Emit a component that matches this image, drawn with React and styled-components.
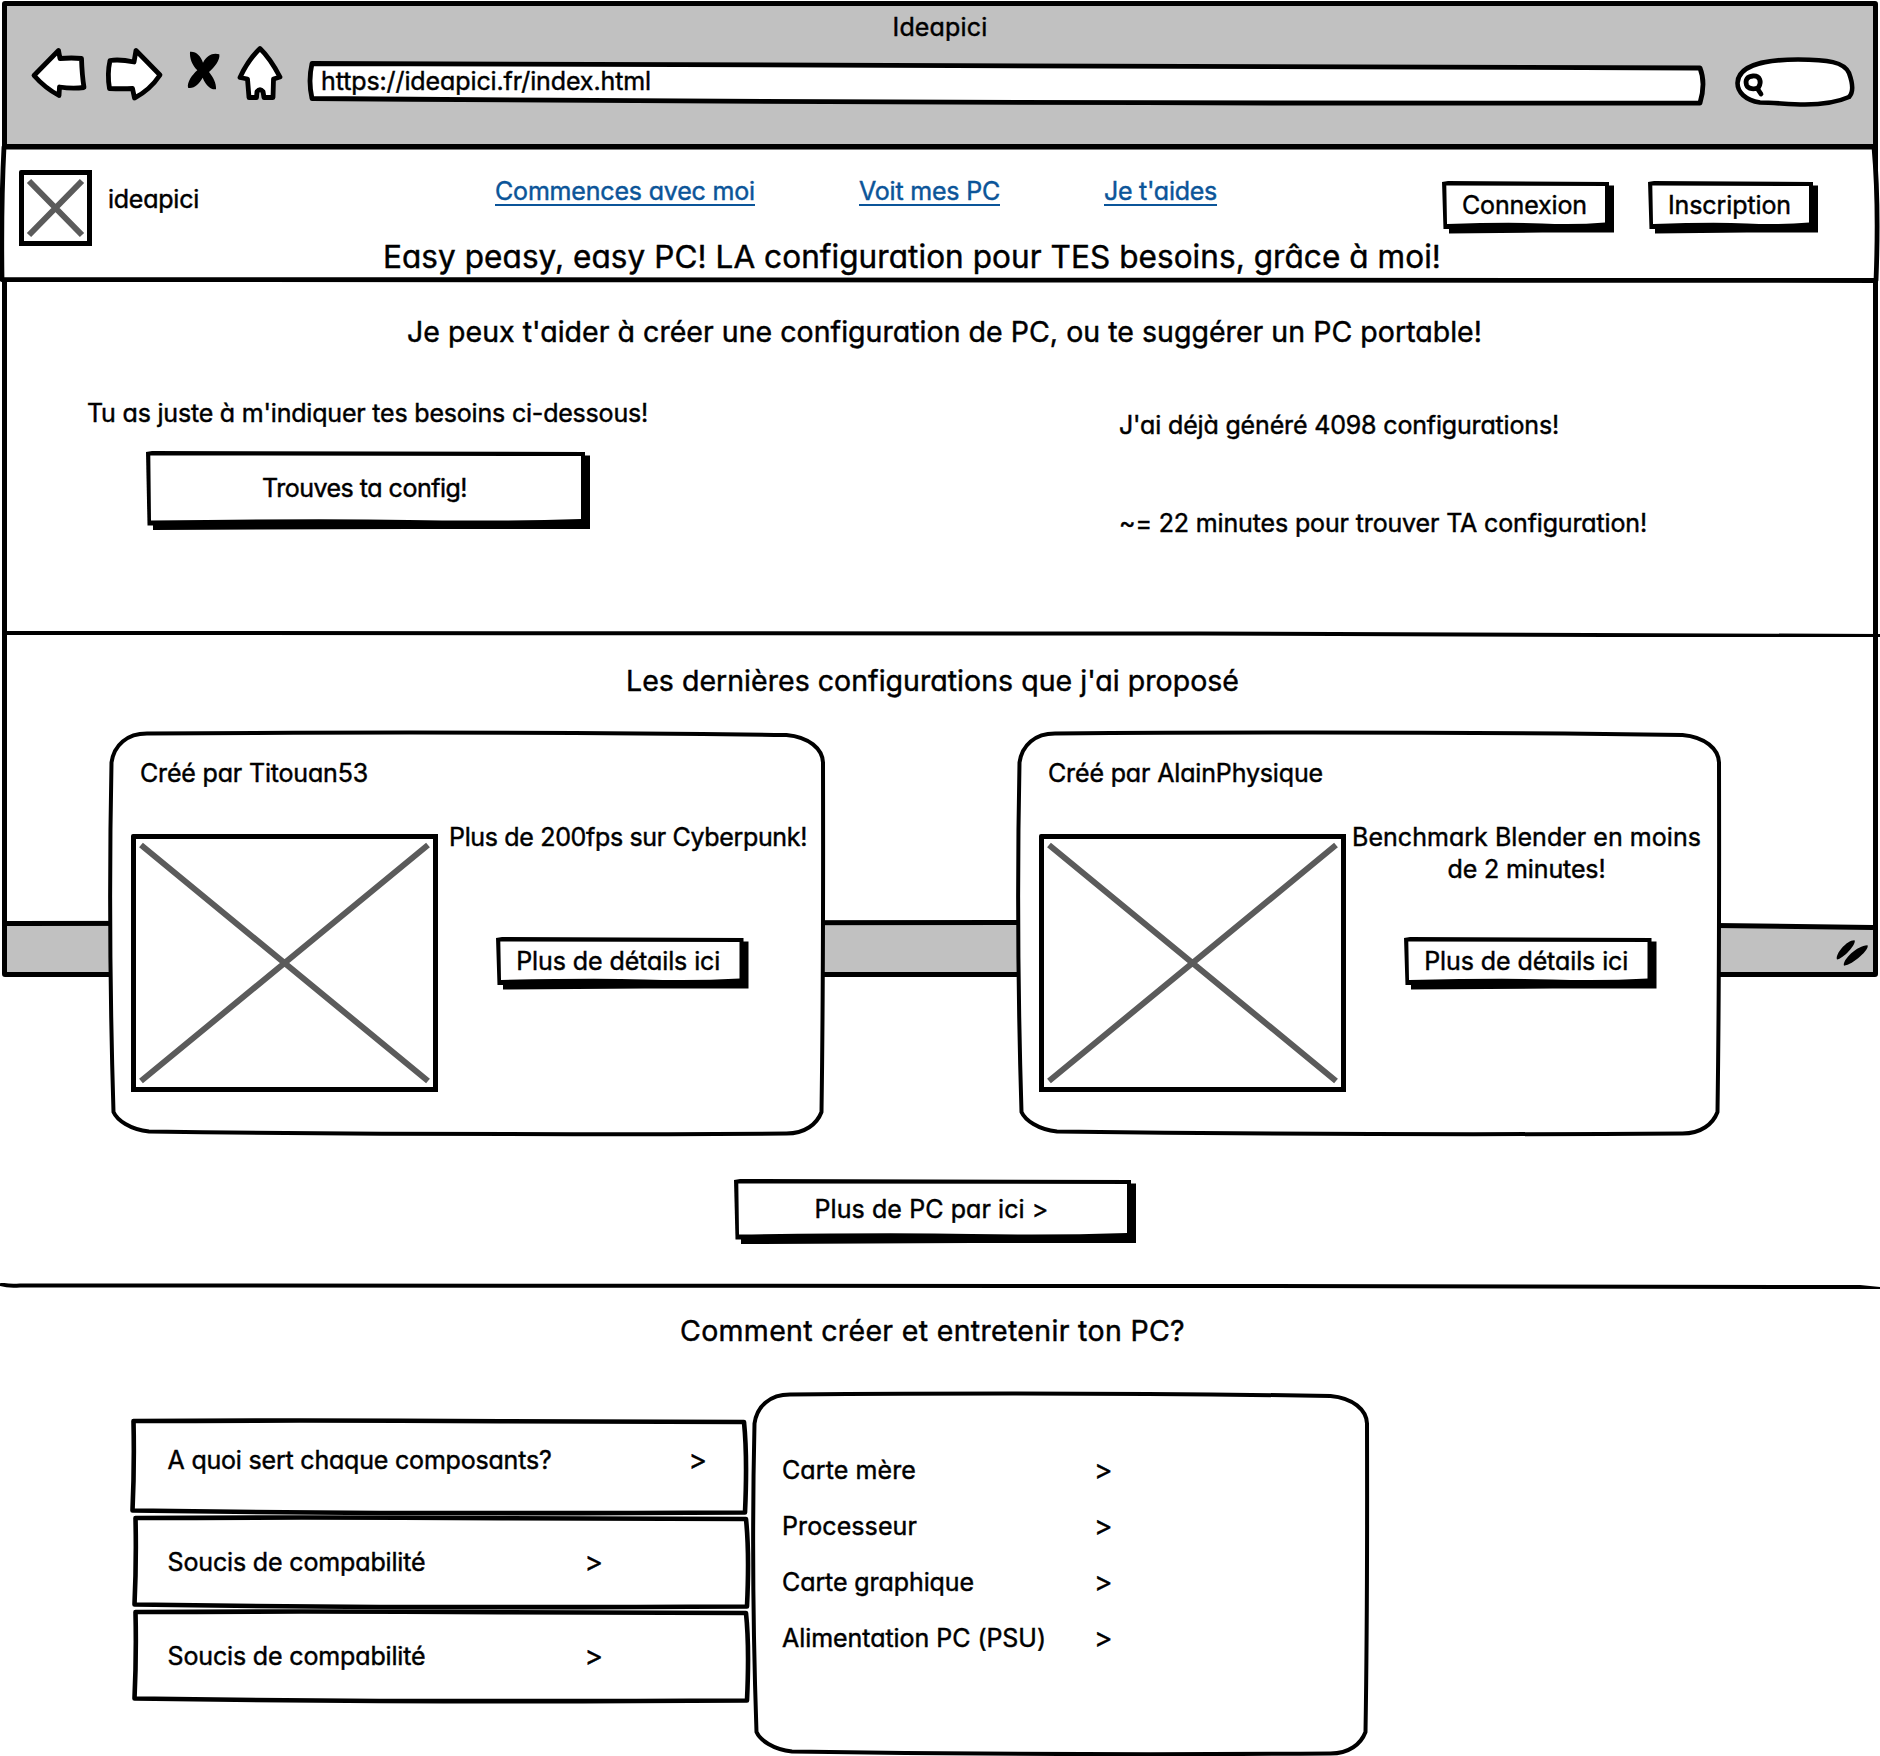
import React, { useLayoutEffect, useRef, useState } from "react";
import styled, { createGlobalStyle } from "styled-components";

const INK = "#000";
const CHROME = "#c1c1c1";
const LINK = "#0b5599";

const GlobalStyle = createGlobalStyle`
  *, *::before, *::after { box-sizing: border-box; }
  body { margin: 0; background: #fff; }
`;

/* ---------- text ---------- */

const TextBox = styled.span`
  display: block;
  flex: none;
  width: ${(p) => p.$w}px;
  margin: 0;
  padding-left: 1px;
  font-size: ${(p) => p.$size}px;
  font-weight: 400;
  line-height: ${(p) => p.$lh}px;
  white-space: nowrap;
`;

const TextRun = styled.span`
  display: inline-block;
`;

/* Tracks a single line of text so that it spans the given width. */
function Label({ w, size = 25, lh = 32, as, className, children }) {
  const ref = useRef(null);
  const [tracking, setTracking] = useState(0);
  useLayoutEffect(() => {
    const natural = ref.current.getBoundingClientRect().width - tracking * children.length;
    setTracking((w - 2 - natural) / children.length);
  }, [w, children]);
  return (
    <TextBox as={as} className={className} $w={w} $size={size} $lh={lh}>
      <TextRun ref={ref} style={{ letterSpacing: `${tracking}px` }}>
        {children}
      </TextRun>
    </TextBox>
  );
}

/* ---------- hand-drawn outlines ---------- */

const Drawing = styled.svg`
  position: absolute;
  inset: 0;
  width: 100%;
  height: 100%;
  overflow: visible;
  z-index: -1;
`;

const Sketched = styled.div`
  position: relative;
  isolation: isolate;
  flex: none;
  width: ${(p) => p.$w}px;
  height: ${(p) => p.$h}px;
`;

function RectOutline({ w, h, stroke = 4.6 }) {
  return (
    <Drawing>
      <path
        d={`M3.5 3 Q${w * 0.3} 2 ${w * 0.6} 3.2 L${w - 4} 4 Q${w - 0.5} ${h * 0.4} ${w - 3} ${h - 2.5} Q${w * 0.45} ${h - 0.5} 2.5 ${h - 4.5} Q4.5 ${h * 0.5} 3.5 3Z`}
        fill="#fff"
        stroke={INK}
        strokeWidth={stroke}
        strokeLinejoin="round"
      />
    </Drawing>
  );
}

function RoundedOutline({ w, h }) {
  return (
    <Drawing>
      <path
        d={`M39 2.5 Q${w * 0.55} 0 ${w - 38.5} 4 C${w - 16} 6 ${w - 2.5} 18 ${w - 2} 31.5
            Q${w - 1.5} ${h * 0.6} ${w - 3.5} ${h - 24} C${w - 8} ${h - 12} ${w - 20} ${h - 2.5} ${w - 38.5} ${h - 2.5}
            Q${w * 0.5} ${h - 0.5} 41 ${h - 4.5} C22 ${h - 6.5} 9 ${h - 16} 5.5 ${h - 24}
            Q0 ${h * 0.5} 3.5 31.5 C6 14 19 2.5 39 2.5Z`}
        fill="#fff"
        stroke={INK}
        strokeWidth="4"
        strokeLinejoin="round"
      />
    </Drawing>
  );
}

function ButtonOutline({ w, h }) {
  return (
    <Drawing>
      <path d={`M7 4.5H${w + 5}V${h + 3.5}H${w * 0.6}L7 ${h + 4.5}Z`} fill={INK} />
      <path d={`M0 1L6 0L${w} 1V${h}H1.5Z`} fill={INK} />
      <path
        d={`M4.3 4.4L${w - 4} 5V${h - 6.5}Q${w * 0.8} ${h - 4} ${w * 0.6} ${h - 5.5}T5 ${h - 5}Z`}
        fill="#fff"
      />
    </Drawing>
  );
}

const ButtonBox = styled.button`
  position: relative;
  isolation: isolate;
  flex: none;
  display: flex;
  justify-content: center;
  align-items: center;
  width: ${(p) => p.$w}px;
  height: ${(p) => p.$h}px;
  padding: 0 2px 0 0;
  border: 0;
  background: none;
  color: inherit;
  font: inherit;
  text-align: left;
`;

function Button({ w, h, textWidth, children }) {
  return (
    <ButtonBox $w={w} $h={h}>
      <ButtonOutline w={w} h={h} />
      <Label w={textWidth}>{children}</Label>
    </ButtonBox>
  );
}

const PictureFrame = styled.div`
  flex: none;
  width: ${(p) => p.$w}px;
  height: ${(p) => p.$h}px;
  border: 5px solid ${INK};
  border-radius: 2px 0 0 0;
  background: #fff;
`;

const Cross = styled.svg`
  display: block;
  width: 100%;
  height: 100%;
`;

function Picture({ w, h }) {
  const iw = w - 10;
  const ih = h - 10;
  return (
    <PictureFrame $w={w} $h={h}>
      <Cross viewBox={`0 0 ${iw} ${ih}`}>
        <path d={`M5 6L${iw - 5} ${ih - 6}M${iw - 5} 6L5 ${ih - 6}`} stroke="#5b5b5b" strokeWidth="6" />
      </Cross>
    </PictureFrame>
  );
}

/* ---------- browser window ---------- */

const Stage = styled.div`
  display: grid;
  grid-template: 1756px / 1880px;
  width: 1880px;
  height: 1756px;
  overflow: hidden;
  background: #fff;
  color: ${INK};
  font-family: Inter, "Liberation Sans", sans-serif;
  font-feature-settings: "cv11";
  -webkit-text-stroke: 0.45px currentColor;
`;

const BrowserWindow = styled.div`
  grid-area: 1 / 1;
  display: flex;
  flex-direction: column;
  justify-content: space-between;
  width: 1876px;
  height: 976px;
  margin: 1px 0 0 2px;
  border: 5px solid ${INK};
  border-radius: 3px;
`;

const Toolbar = styled.div`
  height: 143px;
  background: ${CHROME};
  border-bottom: 5px solid ${INK};
`;

const TitleRow = styled.div`
  display: flex;
  justify-content: center;
  height: 46px;
  padding-top: 5px;
`;

const ControlRow = styled.div`
  display: flex;
  align-items: flex-start;
  padding-left: 19px;
`;

const NavIcons = styled.svg`
  display: block;
  flex: none;
  width: 268px;
  height: 60px;
  margin-top: -10px;
`;

const AddressBar = styled(Sketched)`
  margin: 9px 0 0 14px;
  padding: 4px 0 0 12px;
`;

const SearchField = styled.svg`
  display: block;
  width: 124px;
  height: 54px;
  margin: 3px 0 0 27px;
`;

const StatusBar = styled.div`
  position: relative;
  isolation: isolate;
  display: flex;
  justify-content: flex-end;
  height: 50px;
  padding: 14px 5px 0 0;
`;

const Grip = styled.svg`
  display: block;
  width: 34px;
  height: 30px;
  overflow: visible;
`;

function BrowserChrome() {
  return (
    <BrowserWindow>
      <Toolbar>
        <TitleRow>
          <Label w={97}>Ideapici</Label>
        </TitleRow>
        <ControlRow>
          <NavIcons viewBox="26 42 268 60">
            <g fill="#fff" stroke={INK} strokeWidth="4.8" strokeLinejoin="round">
              <path d="M34 75.5L58.500 50.5L60 58.5Q72 57.500 81.500 58.500Q82 75 84 87.500Q72 89 59.500 87L59 95.500Q45 88 34 75.5Z" />
              <path d="M160 75L136 50.5L134 62Q120 59 110 60.500Q107 74 109.500 88.500Q122 89 132.500 88.500L134.500 98Q150 90 160 75Z" />
              <path d="M260 48.500Q248 60 240 77.500L247.500 79L249 97.500H256.500L257 91.500Q260 88 263 91.500L264 97.500H273L273.500 79L280 77Q270 58 260 48.500Z" />
            </g>
            <path
              d="M190 51.700C196 51 201 56 203 62.700C207 55 213 52.500 219.300 54.300C220.500 60 214 68 209 72C213 77 216.500 83 216 89.300C210 90 205 84 202.700 77.700C199 84 194 89 188 87.700C187 82 192 75 197.300 70.300C192 65 189.500 58 190 51.700Z"
              fill={INK}
            />
          </NavIcons>
          <AddressBar $w={1398} $h={45}>
            <Drawing>
              <path
                d="M4 2.500Q700 3 1392 7Q1398 22 1392 42Q700 43 4 37.500Q0 20 4 2.500Z"
                fill="#fff"
                stroke={INK}
                strokeWidth="4.800"
                strokeLinejoin="round"
              />
            </Drawing>
            <Label w={332}>https://ideapici.fr/index.html</Label>
          </AddressBar>
          <SearchField viewBox="1733 55 124 54">
            <path
              d="M1760 102.500C1745 100 1737.500 92 1737.500 83C1738 68 1758 59.500 1798 59.500C1828 59.500 1844 62 1849 73C1853 84 1853 93 1849 97C1840 101 1828 104.500 1805 104.500C1788 104.500 1775 102.500 1760 102.500Z"
              fill="#fff"
              stroke={INK}
              strokeWidth="4.600"
            />
            <path
              d="M1753 76C1747 76.500 1745 80 1746.500 85C1748 89.500 1755 89.500 1758.500 87.500C1762 82 1760 75.500 1753 76ZM1757 88L1761 94"
              fill="none"
              stroke={INK}
              strokeWidth="4.800"
              strokeLinecap="round"
            />
          </SearchField>
        </ControlRow>
      </Toolbar>
      <StatusBar>
        <Drawing>
          <path d="M0 1.500Q300 -1 1000 0.500L1500 1L1866 5.500V50H0Z" fill={CHROME} />
          <path d="M0 1.500Q300 -1 1000 0.500L1500 1L1866 5.500" fill="none" stroke={INK} strokeWidth="5" />
        </Drawing>
        <Grip viewBox="0 0 34 30">
          <path
            d="M3 23.500C1 18 13 4 20.500 4.300C23 8 9 23 3 23.500ZM10 29.700C8 24 24 9 33.500 9.300C36 13 19 29 10 29.700Z"
            fill={INK}
          />
        </Grip>
      </StatusBar>
    </BrowserWindow>
  );
}

/* ---------- page ---------- */

const Page = styled.div`
  grid-area: 1 / 1;
  z-index: 1;
  display: flex;
  flex-direction: column;
  padding-top: 144px;
`;

const SiteHeader = styled(Sketched).attrs({ as: "header" })``;

const HeaderRow = styled.div`
  display: grid;
  grid-template-columns: 494px 948px auto;
  height: 94px;
`;

const Brand = styled.div`
  display: flex;
  align-items: flex-start;
  gap: 15px;
  padding: 26px 0 0 19px;
`;

const BrandName = styled.div`
  padding-top: 13px;
`;

const Nav = styled.nav`
  display: flex;
  gap: 102px;
  padding-top: 31px;
`;

const NavLink = styled(Label)`
  color: ${LINK};

  ${TextRun} {
    text-decoration: underline 2px;
    text-underline-offset: 4px;
    text-decoration-skip-ink: none;
  }
`;

const Actions = styled.div`
  display: flex;
  gap: 39px;
  padding-top: 37px;
`;

const Indent = styled.div`
  padding-left: ${(p) => p.$left}px;
`;

const Hero = styled.section`
  height: 348px;
  padding-top: 31px;
`;

const HeroColumns = styled.div`
  display: grid;
  grid-template-columns: 1118px auto;
  padding-top: 47px;
`;

const Pitch = styled.div`
  display: flex;
  flex-direction: column;
  gap: 22px;
  padding-left: 86px;
`;

const PitchAction = styled.div`
  padding-left: 60px;
`;

const Stats = styled.div`
  display: flex;
  flex-direction: column;
  gap: 66px;
  padding-top: 12px;
`;

const Rule = styled.svg`
  display: block;
  flex: none;
  width: 1880px;
  height: 6px;
`;

const Latest = styled.section`
  height: 646px;
  padding-top: 26px;
`;

const CardRow = styled.div`
  display: flex;
  gap: 191px;
  padding: 32px 0 0 108px;
`;

const Card = styled(Sketched)`
  padding: 26px 0 0 23px;
`;

const CardBody = styled.div`
  display: flex;
  padding-top: 45px;
`;

const CardInfo = styled.div`
  display: flex;
  flex-direction: column;
  align-items: flex-start;
  padding-left: ${(p) => p.$left}px;
`;

const Blurb = styled.div`
  display: flex;
  flex-direction: column;
  align-items: center;
  height: 116px;
  margin-top: -13px;
`;

const MoreRow = styled.div`
  padding: 43px 0 0 734px;
`;

const Guides = styled.section`
  padding-top: 24px;
`;

const GuideColumns = styled.div`
  display: flex;
  align-items: flex-start;
  padding: 43px 0 0 130px;
`;

const Questions = styled.div`
  display: flex;
  flex-direction: column;
  width: 621px;
  padding-top: 26px;
`;

const Question = styled(Sketched)`
  display: flex;
  gap: ${(p) => p.$gap}px;
  margin-left: ${(p) => p.$shift}px;
  padding: ${(p) => p.$top}px 0 0 ${(p) => 36.5 - p.$shift}px;
`;

const Topics = styled(Sketched)`
  display: flex;
  flex-direction: column;
  gap: 24px;
  padding: 62px 0 0 30px;
`;

const Topic = styled.div`
  display: grid;
  grid-template-columns: 313px auto;
`;

const Chevron = styled.span`
  font-size: 28px;
  line-height: 32px;
`;

const cards = [
  {
    author: "Créé par Titouan53", authorWidth: 230, width: 717, blurbLeft: 10,
    lines: [["Plus de 200fps sur Cyberpunk!", 360]],
  },
  {
    author: "Créé par AlainPhysique", authorWidth: 277, width: 705, blurbLeft: 5,
    lines: [["Benchmark Blender en moins", 351], ["de 2 minutes!", 160]],
  },
];

const questions = [
  { text: "A quoi sert chaque composants?", w: 386, h: 97, gap: 136, top: 26, shift: 0 },
  { text: "Soucis de compabilité", w: 260, h: 94, gap: 158, top: 31, shift: 2 },
  { text: "Soucis de compabilité", w: 260, h: 94, gap: 158, top: 31, shift: 2 },
];

const topics = [
  ["Carte mère", 136],
  ["Processeur", 137],
  ["Carte graphique", 194],
  ["Alimentation PC (PSU)", 266],
];

/* Left edge of a card's button, measured from its picture. */
const CARD_BUTTON_LEFT = 57.5;

const ButtonSlot = styled.div`
  padding-left: ${(p) => p.$left}px;
`;

export default function App() {
  return (
    <>
      <GlobalStyle />
      <Stage>
        <BrowserChrome />
        <Page>
          <SiteHeader $w={1880} $h={139}>
            <Drawing>
              <path
                d="M4 3H1874Q1879 60 1876 136.500Q1000 138 2 135.500Q1 60 4 3Z"
                fill="#fff"
                stroke={INK}
                strokeWidth="4.800"
                strokeLinejoin="round"
              />
            </Drawing>
            <HeaderRow>
              <Brand>
                <Picture w={73} h={76} />
                <BrandName>
                  <Label w={93}>ideapici</Label>
                </BrandName>
              </Brand>
              <Nav>
                <NavLink w={262}>Commences avec moi</NavLink>
                <NavLink w={143}>Voit mes PC</NavLink>
                <NavLink w={115}>Je t'aides</NavLink>
              </Nav>
              <Actions>
                <Button w={167} h={48} textWidth={127}>Connexion</Button>
                <Button w={165} h={48} textWidth={125}>Inscription</Button>
              </Actions>
            </HeaderRow>
            <Indent $left={382}>
              <Label as="h1" w={1060} size={31.5} lh={38}>
                Easy peasy, easy PC! LA configuration pour TES besoins, grâce à moi!
              </Label>
            </Indent>
          </SiteHeader>

          <Hero>
            <Indent $left={406}>
              <Label as="h2" w={1077} size={28.5} lh={36}>
                Je peux t'aider à créer une configuration de PC, ou te suggérer un PC portable!
              </Label>
            </Indent>
            <HeroColumns>
              <Pitch>
                <Label w={563}>Tu as juste à m'indiquer tes besoins ci-dessous!</Label>
                <PitchAction>
                  <Button w={439} h={74.5} textWidth={207}>Trouves ta config!</Button>
                </PitchAction>
              </Pitch>
              <Stats>
                <Label w={442}>J'ai déjà généré 4098 configurations!</Label>
                <Label w={530}>~= 22 minutes pour trouver TA configuration!</Label>
              </Stats>
            </HeroColumns>
          </Hero>

          <Rule viewBox="0 0 1880 6">
            <path d="M6 2Q800 1.500 1200 2.500T1880 5" fill="none" stroke={INK} strokeWidth="4" />
          </Rule>

          <Latest>
            <Indent $left={625}>
              <Label as="h2" w={615} size={28.5} lh={36}>Les dernières configurations que j'ai proposé</Label>
            </Indent>
            <CardRow>
              {cards.map((c) => (
                <Card key={c.author} $w={c.width} $h={405}>
                  <RoundedOutline w={c.width} h={405} />
                  <Indent $left={8}>
                    <Label w={c.authorWidth}>{c.author}</Label>
                  </Indent>
                  <CardBody>
                    <Picture w={307} h={258} />
                    <CardInfo $left={c.blurbLeft}>
                      <Blurb>
                        {c.lines.map(([text, w]) => (
                          <Label key={text} w={w}>{text}</Label>
                        ))}
                      </Blurb>
                      <ButtonSlot $left={CARD_BUTTON_LEFT - c.blurbLeft}>
                        <Button w={247.5} h={48} textWidth={206}>Plus de détails ici</Button>
                      </ButtonSlot>
                    </CardInfo>
                  </CardBody>
                </Card>
              ))}
            </CardRow>
            <MoreRow>
              <Button w={397} h={60.5} textWidth={236}>{"Plus de PC par ici >"}</Button>
            </MoreRow>
          </Latest>

          <Rule viewBox="0 0 1880 6">
            <path d="M0 1Q8 3.500 20 2.500Q700 2.500 1200 3T1860 4L1880 6" fill="none" stroke={INK} strokeWidth="4" />
          </Rule>

          <Guides>
            <Indent $left={679}>
              <Label as="h2" w={507} size={28.5} lh={36}>Comment créer et entretenir ton PC?</Label>
            </Indent>
            <GuideColumns>
              <Questions>
                {questions.map((q, i) => (
                  <Question key={i} $w={618} $h={q.h} $gap={q.gap} $top={q.top} $shift={q.shift}>
                    <RectOutline w={618} h={q.h} />
                    <Label w={q.w}>{q.text}</Label>
                    <Chevron>{">"}</Chevron>
                  </Question>
                ))}
              </Questions>
              <Topics $w={618} $h={364}>
                <RoundedOutline w={618} h={364} />
                {topics.map(([text, w]) => (
                  <Topic key={text}>
                    <Label w={w}>{text}</Label>
                    <Chevron>{">"}</Chevron>
                  </Topic>
                ))}
              </Topics>
            </GuideColumns>
          </Guides>
        </Page>
      </Stage>
    </>
  );
}
